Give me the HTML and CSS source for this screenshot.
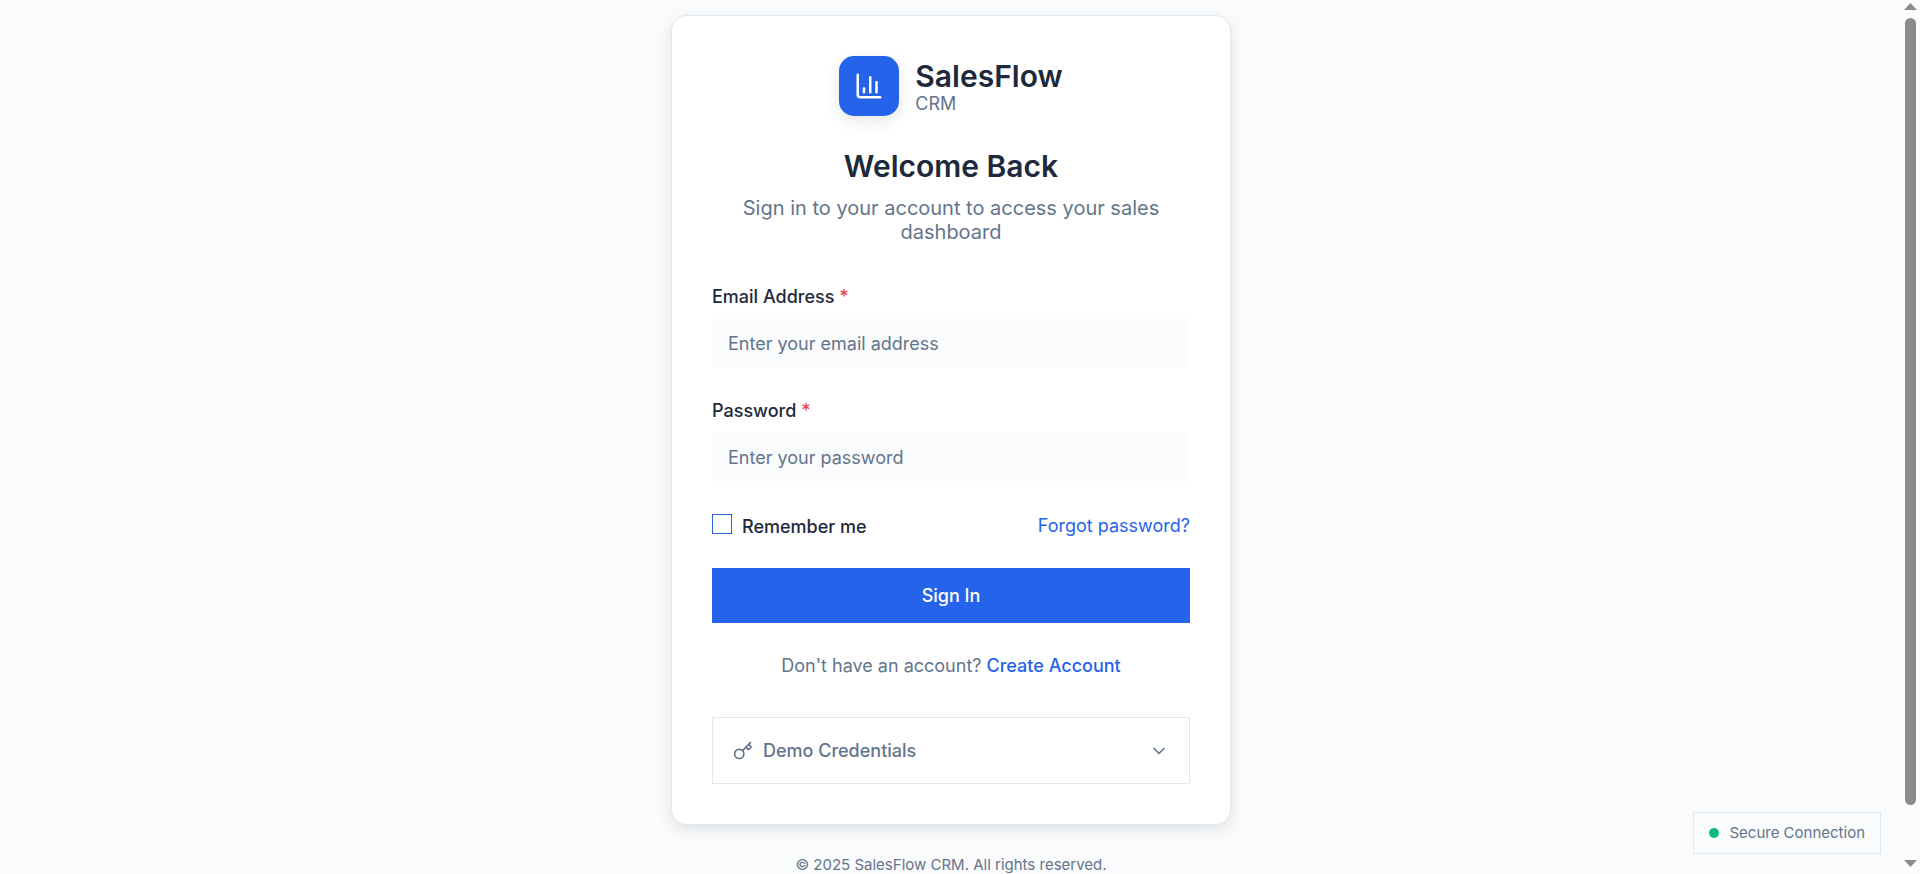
FILE: index.html
```html
<!DOCTYPE html>
<html lang="en">
<head>
<meta charset="utf-8">
<meta name="viewport" content="width=device-width, initial-scale=1">
<title>SalesFlow CRM - Sign In</title>
<link rel="stylesheet" href="styles.css">
</head>
<body>
<div class="window">
  <div class="page">
    <main class="card">
      <header class="card-header">
        <div class="brand">
          <div class="brand-mark">
            <svg class="icon icon-lg" viewBox="0 0 24 24" aria-hidden="true"><path d="M3 3v16a2 2 0 0 0 2 2h16"/><path d="M18 17V9"/><path d="M13 17V5"/><path d="M8 17v-3"/></svg>
          </div>
          <div>
            <div class="brand-name">SalesFlow</div>
            <div class="brand-sub">CRM</div>
          </div>
        </div>
        <h1 class="title">Welcome Back</h1>
        <p class="subtitle">Sign in to your account to access your sales dashboard</p>
      </header>
      <form class="form">
        <div class="field">
          <label class="label" for="email">Email Address <span class="required">*</span></label>
          <input class="input" id="email" type="email" placeholder="Enter your email address">
        </div>
        <div class="field">
          <label class="label" for="password">Password <span class="required">*</span></label>
          <input class="input" id="password" type="password" placeholder="Enter your password">
        </div>
        <div class="options">
          <div class="remember">
            <input class="checkbox" id="remember" type="checkbox">
            <label class="remember-label" for="remember">Remember me</label>
          </div>
          <a class="link" href="#">Forgot password?</a>
        </div>
        <button class="submit" type="submit">Sign In</button>
      </form>
      <p class="signup">Don't have an account? <a class="link link-strong" href="#">Create Account</a></p>
      <button class="demo" type="button">
        <svg class="icon" viewBox="0 0 24 24" aria-hidden="true"><path d="m15.5 7.5 2.3 2.3a1 1 0 0 0 1.4 0l2.1-2.1a1 1 0 0 0 0-1.4L19 4"/><path d="m21 2-9.6 9.6"/><circle cx="7.5" cy="15.5" r="5.5"/></svg>
        <span class="demo-text">Demo Credentials</span>
        <svg class="icon" viewBox="0 0 24 24" aria-hidden="true"><path d="m6 9 6 6 6-6"/></svg>
      </button>
    </main>
    <footer class="footer">© 2025 SalesFlow CRM. All rights reserved.</footer>
    <div class="secure"><span class="dot"></span>Secure Connection</div>
  </div>
  <div class="scrollbar" aria-hidden="true">
    <svg class="arrow" viewBox="0 0 13 7"><path d="M0 7 6.5 0 13 7z"/></svg>
    <div class="track"><div class="thumb"></div></div>
    <svg class="arrow" viewBox="0 0 13 7"><path d="M0 0 6.5 7 13 0z"/></svg>
  </div>
</div>
</body>
</html>
```
FILE: styles.css
```css
* { box-sizing: border-box; }

body {
  margin: 0;
  background: #fafbfd;
  color: #1e293b;
  font-family: Inter, "Liberation Sans", sans-serif;
  font-size: 18px;
  line-height: 22px;
}

h1, p { margin: 0; }

button, input { font: inherit; }

.window {
  display: flex;
  height: 100vh;
}

.page {
  position: relative;
  flex: 1;
  display: flex;
  flex-direction: column;
  align-items: center;
  padding: 15px 20px;
  overflow: hidden;
}

.card {
  flex: none;
  width: 100%;
  max-width: 560px;
  padding: 40px;
  background: #ffffff;
  border: 1px solid #e2e8f0;
  border-radius: 15px;
  box-shadow: 0 5px 15px rgba(0, 0, 0, 0.1);
}

.card-header {
  display: flex;
  flex-direction: column;
  align-items: center;
  margin-bottom: 42px;
  text-align: center;
}

.brand {
  display: flex;
  align-items: center;
  gap: 16px;
  margin-bottom: 32px;
  text-align: left;
}

.brand-mark {
  display: flex;
  align-items: center;
  justify-content: center;
  width: 60px;
  height: 60px;
  border-radius: 15px;
  background: #2563eb;
  color: #ffffff;
  box-shadow: 0 5px 15px rgba(0, 0, 0, 0.1);
}

.brand-name, .title {
  font-size: 30px;
  font-weight: 600;
  line-height: 36px;
}

.brand-sub {
  color: #64748b;
  line-height: 20px;
}

.title { margin-bottom: 12px; }

.subtitle {
  color: #64748b;
  font-size: 20px;
  line-height: 24px;
}

.icon {
  flex: none;
  width: 20px;
  height: 20px;
  fill: none;
  stroke: currentColor;
  stroke-width: 2;
  stroke-linecap: round;
  stroke-linejoin: round;
}

.icon-lg {
  width: 30px;
  height: 30px;
}

.field { margin-bottom: 32px; }

.label {
  display: block;
  margin-bottom: 10px;
  font-weight: 500;
}

.required { color: #ef4444; }

.input {
  display: block;
  width: 100%;
  height: 50px;
  padding: 0 15px;
  border: 1px solid #ffffff;
  background: #fafbfd;
  color: #1e293b;
}

.input::placeholder {
  color: #64748b;
  opacity: 1;
}

.options {
  display: flex;
  align-items: center;
  justify-content: space-between;
  margin-bottom: 30px;
}

.remember {
  display: flex;
  align-items: flex-start;
  gap: 10px;
}

.checkbox {
  appearance: none;
  width: 20px;
  height: 20px;
  margin: 0;
  border: 1px solid #2563eb;
  background: #ffffff;
}

.remember-label {
  padding-top: 2px;
  font-weight: 500;
}

.link {
  color: #2563eb;
  text-decoration: none;
}

.link-strong { font-weight: 500; }

.submit {
  display: block;
  width: 100%;
  height: 55px;
  border: 0;
  background: #2563eb;
  color: #ffffff;
  font-weight: 500;
}

.signup {
  margin: 32px 0 40px;
  color: #64748b;
  text-align: center;
}

.demo {
  display: flex;
  align-items: center;
  gap: 10px;
  width: 100%;
  height: 67px;
  padding: 0 20px;
  border: 1px solid #e2e8f0;
  background: #ffffff;
  color: #64748b;
  font-weight: 500;
}

.demo-text {
  flex: 1;
  text-align: left;
}

.footer {
  margin-top: 31px;
  color: #64748b;
  font-size: 15px;
  line-height: 18px;
}

.secure {
  position: absolute;
  right: 21px;
  bottom: 20px;
  display: flex;
  align-items: center;
  gap: 10px;
  padding: 11px 15px;
  border: 1px solid #e2e8f0;
  background: #fafbfd;
  color: #64748b;
  font-size: 15px;
  line-height: 18px;
}

.dot {
  width: 10px;
  height: 10px;
  border-radius: 50%;
  background: #10b981;
}

.scrollbar {
  flex: none;
  display: flex;
  flex-direction: column;
  align-items: center;
  gap: 8px;
  width: 18px;
  padding: 3px 1px 7px 0;
  background: #fcfcfc;
}

.arrow {
  width: 13px;
  height: 7px;
  fill: #8b8b8b;
}

.track {
  flex: 1;
  width: 11px;
  padding-bottom: 47px;
}

.thumb {
  height: 100%;
  border-radius: 6px;
  background: #8b8b8b;
}
```
